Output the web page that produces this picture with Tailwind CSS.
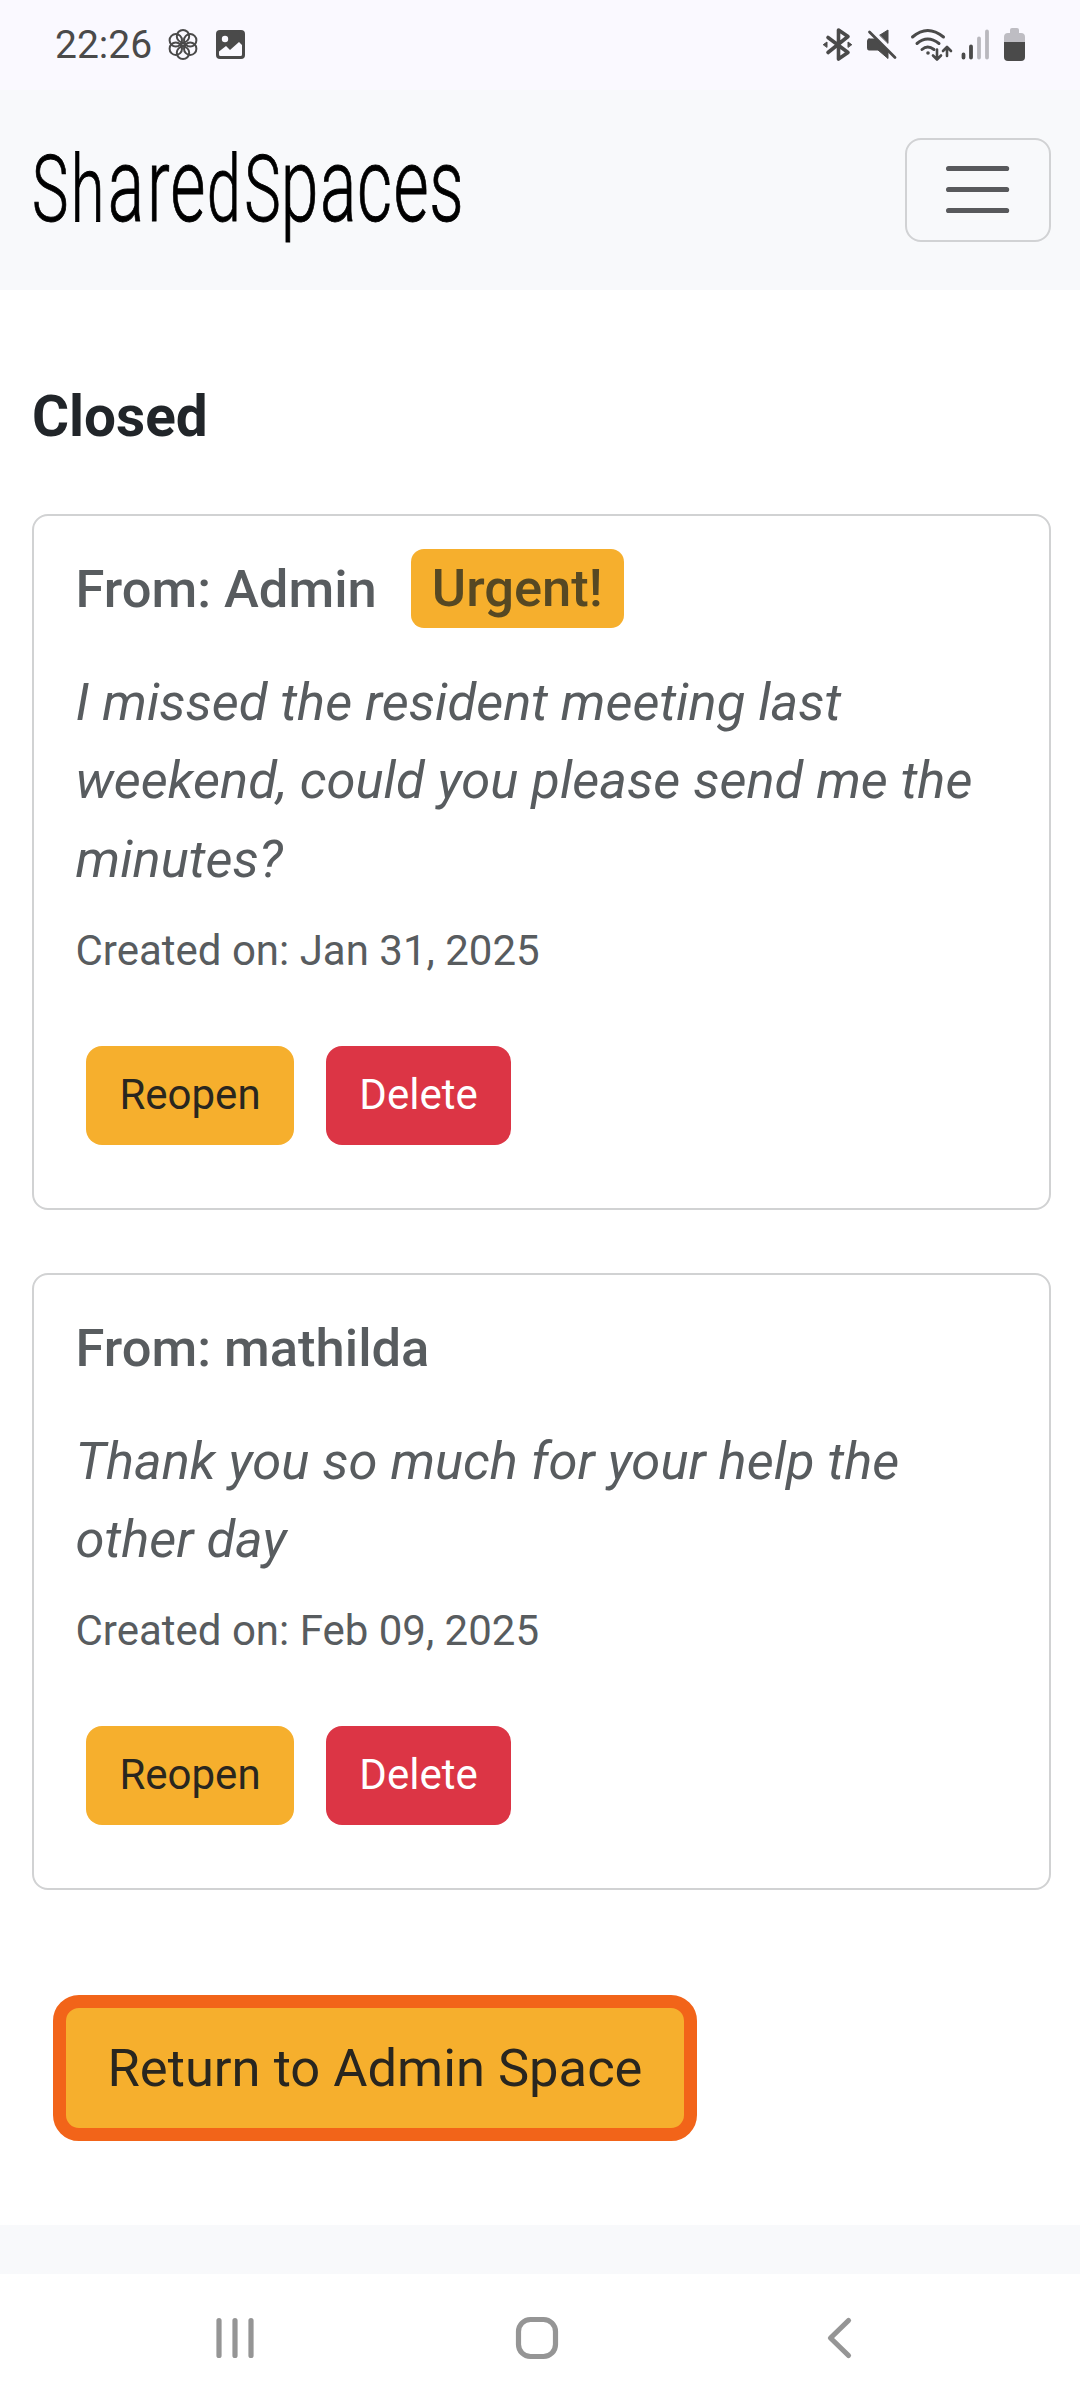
<!DOCTYPE html>
<html lang="en">
<head>
<meta charset="utf-8">
<title>SharedSpaces</title>
<script src="https://cdn.jsdelivr.net/npm/@tailwindcss/browser@4"></script>
</head>
<body class="bg-white font-[Roboto,sans-serif] text-[#212529]">
<div class="flex h-[2400px] w-[1080px] flex-col overflow-hidden">

  <!-- Status bar -->
  <div class="flex h-[90px] shrink-0 items-start justify-between bg-[#faf9ff] pl-[55px] pr-[50px] pt-[20px] text-[#4a4a4a]">
    <div class="flex">
      <span class="w-[105px] pt-[1px] text-[39px] leading-[48px]">22:26</span>
      <svg class="h-[50px] w-[90px]" viewBox="160 20 90 50" fill="none">
        <g stroke="#4a4a4a" stroke-width="2">
          <circle cx="183" cy="36.2" r="6.2"/><circle cx="190.2" cy="40.3" r="6.2"/><circle cx="190.2" cy="48.7" r="6.2"/>
          <circle cx="183" cy="52.8" r="6.2"/><circle cx="175.8" cy="48.7" r="6.2"/><circle cx="175.8" cy="40.3" r="6.2"/>
          <circle cx="183" cy="44.5" r="1.5"/>
        </g>
        <rect x="216" y="30" width="29" height="29" rx="4" fill="#4a4a4a"/>
        <circle cx="225" cy="39" r="3.2" fill="#faf9ff"/>
        <path d="M219 54.500v-3l7-5.500 4 4 9-8 3 3v9.500q0 1.500-1.500 1.500h-20q-1.500 0-1.500-1.500z" fill="#faf9ff"/>
      </svg>
    </div>
    <svg class="h-[50px] w-[210px]" viewBox="820 20 210 50" fill="none" stroke="#4a4a4a" stroke-linecap="round" stroke-linejoin="round">
      <path d="M828 37.500l20 15-9.500 6.500v-29l9.500 6.500-20 16" stroke-width="3.600"/>
      <path d="M823.500 44.500l3.500-2.500v5zM851.500 44.500l-3.500-2.500v5z" fill="#4a4a4a" stroke-width="1"/>
      <path d="M869 39h6l13 12v7.500l-10-8.500h-9q-1.500 0-1.500-1.500v-8q0-1.500 1.500-1.500zM880 35l8-5v13z" fill="#4a4a4a" stroke-width="1"/>
      <path d="M869.500 32l25.500 25.500" stroke-width="2.800"/>
      <g stroke-width="3">
        <path d="M912.500 37q15-13 31 0M917 43.500q10.500-9 22 0M922 49.500q5.500-5 12 0"/>
        <path d="M937 49.500v9M933 55.500l4 4 4-4M947 56v-8.500M943 51l4-4 4 4" stroke-width="2.600"/>
      </g>
      <circle cx="928" cy="53" r="1.800" fill="#4a4a4a" stroke="none"/>
      <path d="M963.500 54.500v3M971 46.500v11" stroke-width="3.800"/>
      <path d="M979 38.500v19M987 31.500v26" stroke="#b9b8be" stroke-width="3.800"/>
      <path d="M1004 42v-5q0-4 4-4h2v-3q0-2 2-2h5q2 0 2 2v3h2q4 0 4 4v5z" fill="#bebdc3" stroke="none"/>
      <path d="M1004 42h21v15q0 4-4 4h-13q-4 0-4-4z" fill="#4a4a4a" stroke="none"/>
    </svg>
  </div>

  <!-- Site header -->
  <header class="flex h-[200px] shrink-0 items-center justify-between bg-[#f8f9fb] pl-[22px] pr-[29px]">
    <svg class="h-[160px] w-[452px] overflow-visible" viewBox="-10 -30 452 160" fill="#000" stroke="#000" stroke-width=".9" font-family="Roboto, sans-serif" font-weight="300" text-anchor="middle">
      <text transform="translate(0 81) scale(.66 1)" y="0" font-size="93"><tspan x="27.500 84.100">Sh</tspan><tspan font-size="103" x="142.500 191.500 236">are</tspan><tspan x="290.700 349.200">dS</tspan><tspan font-size="103" x="405.500 463.900 518.900 574.200 628">paces</tspan></text>
    </svg>
    <button class="flex h-[104px] w-[146px] items-center justify-center rounded-[16px] border-2 border-[#d1d2d4]" aria-label="Menu">
      <svg class="h-[50px] w-[64px]" viewBox="0 0 64 50" stroke="#58595c" stroke-width="5.200" stroke-linecap="round"><path d="M2.600 3.500h58M2.600 24.500h58M2.600 45.500h58"/></svg>
    </button>
  </header>

  <main class="flex h-[1935px] shrink-0 flex-col items-start pl-[32px] pr-[29px] pt-[92px]">
    <h1 class="text-[56.700px] font-bold leading-[69px]">Closed</h1>

    <section class="mt-[63px] h-[696px] w-full rounded-[16px] border-2 border-[#d1d2d3] pl-[41.500px] pt-[33px] text-[#585c5f]">
      <div class="flex h-[79px] items-center gap-[34px] text-[52.500px] font-medium">
        <h2 class="pt-[2px]">From: Admin</h2>
        <span class="h-[79px] rounded-[13px] bg-[#f6af2d] px-[21px] leading-[79px] text-[#564823]">Urgent!</span>
      </div>
      <p class="mt-[34.500px] text-[52.500px] italic leading-[78.750px]">I missed the resident meeting last<br>weekend, could you please send me the<br>minutes?</p>
      <p class="mt-[27px] text-[42px] leading-[50px]">Created on: Jan 31, 2025</p>
      <div class="ml-[10.500px] mt-[70px] flex gap-[32px] text-[42px] leading-[97px]">
        <button class="h-[99px] w-[208px] rounded-[16px] bg-[#f6af2d] pb-[2px] text-[#29261f]">Reopen</button>
        <button class="h-[99px] w-[185px] rounded-[16px] bg-[#dc3545] pb-[2px] text-white">Delete</button>
      </div>
    </section>

    <section class="mt-[63px] h-[617px] w-full rounded-[16px] border-2 border-[#d1d2d3] pl-[41.500px] pt-[33px] text-[#585c5f]">
      <div class="flex h-[79px] items-center text-[52.500px] font-medium">
        <h2 class="pt-[2px]">From: mathilda</h2>
      </div>
      <p class="mt-[34.500px] text-[52.500px] italic leading-[78.750px]">Thank you so much for your help the<br>other day</p>
      <p class="mt-[27px] text-[42px] leading-[50px]">Created on: Feb 09, 2025</p>
      <div class="ml-[10.500px] mt-[70px] flex gap-[32px] text-[42px] leading-[97px]">
        <button class="h-[99px] w-[208px] rounded-[16px] bg-[#f6af2d] pb-[2px] text-[#29261f]">Reopen</button>
        <button class="h-[99px] w-[185px] rounded-[16px] bg-[#dc3545] pb-[2px] text-white">Delete</button>
      </div>
    </section>

    <button class="ml-[21px] mt-[105px] h-[146px] w-[644px] rounded-[26px] border-[13px] border-[#f26419] bg-[#f6af2d] text-[52.500px] leading-[118px] text-[#29261f]">Return to Admin Space</button>
  </main>

  <footer class="h-[49px] shrink-0 bg-[#f8f9fb]"></footer>

  <!-- System navigation -->
  <nav class="flex h-[126px] shrink-0 items-center bg-white pl-[210px]">
    <svg class="h-[50px] w-[650px]" viewBox="210 2312 650 50" fill="none" stroke="#959595" stroke-width="5.200" stroke-linecap="round" stroke-linejoin="round">
      <path d="M219 2320.500v35M235 2320.500v35M251 2320.500v35"/>
      <rect x="518.500" y="2319.500" width="37" height="37" rx="12"/>
      <path d="M848.500 2320.500l-18 17.500 18 17.500"/>
    </svg>
  </nav>
</div>
</body>
</html>
